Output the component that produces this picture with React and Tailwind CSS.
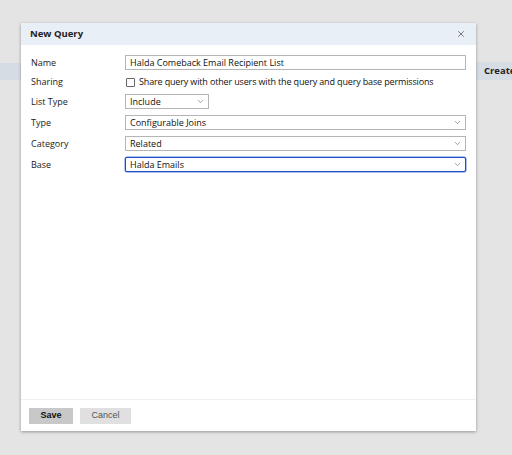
import { X, ChevronDown } from 'lucide-react'

const font = { fontFamily: '"Open Sans", "Noto Sans", sans-serif' }

function Row({ label, h = 'h-[21px]', children }) {
  return (
    <div className={`flex items-center ${h}`}>
      <div className="w-[104px] pl-[10px] text-[9px] text-[#222]">{label}</div>
      {children}
    </div>
  )
}

function Select({ value, width, focus }) {
  return (
    <div
      className={`flex items-center justify-between h-[15px] pl-[4px] pr-[3px] bg-white text-[9px] text-[#111] ${width} ${
        focus ? 'border border-[#1d4fc4] rounded-[2px] shadow-[0_0_0_0.5px_#5d86e0]' : 'border border-[#b5b5b5]'
      }`}
    >
      <span>{value}</span>
      <ChevronDown className="w-[9px] h-[9px] text-[#555]" strokeWidth={1.5} />
    </div>
  )
}

export default function App() {
  return (
    <div className="relative w-[512px] h-[455px] bg-[#e4e4e4] overflow-hidden" style={font}>
      <div className="absolute left-0 top-[63px] w-[21px] h-[17px] bg-[#d6dce4]" />
      <div className="absolute left-[476px] top-[62px] w-[40px] h-[18px] bg-[#d6dce4] flex items-center pl-[8px] text-[9.5px] font-bold text-[#222] whitespace-nowrap">
        Create
      </div>

      <div className="absolute left-[21px] top-[23px] w-[455px] h-[408px] bg-white flex flex-col shadow-[0_1px_3px_rgba(0,0,0,0.35)]">
        <div className="flex items-center justify-between h-[22px] bg-[#e9eff6] pl-[9px] pr-[10px]">
          <span className="text-[9.5px] font-bold text-[#222]">New Query</span>
          <X className="w-[10px] h-[10px] text-[#333]" strokeWidth={1.5} />
        </div>

        <div className="flex-1 pt-[7px]">
          <Row label="Name">
            <div className="flex items-center h-[15px] w-[341px] pl-[4px] border border-[#b5b5b5] text-[9px] text-[#111]">
              Halda Comeback Email Recipient List
            </div>
          </Row>
          <Row label="Sharing" h="h-[18px]">
            <div className="flex items-center gap-[4px] pl-[1px] text-[9px] text-[#111] tracking-[-0.15px]">
              <div className="w-[9px] h-[9px] border border-[#666] rounded-[1px] bg-white" />
              Share query with other users with the query and query base permissions
            </div>
          </Row>
          <Row label="List Type">
            <Select value="Include" width="w-[84px]" />
          </Row>
          <Row label="Type">
            <Select value="Configurable Joins" width="w-[341px]" />
          </Row>
          <Row label="Category">
            <Select value="Related" width="w-[341px]" />
          </Row>
          <Row label="Base">
            <Select value="Halda Emails" width="w-[341px]" focus />
          </Row>
        </div>

        <div className="h-[32px] border-t border-[#f0f0f0] flex items-center gap-[7px] pl-[8px]" style={{ fontFamily: '"Liberation Sans", Arial, sans-serif' }}>
          <button className="w-[44px] h-[16px] bg-[#c8c8c8] text-[9px] font-bold text-[#111]">Save</button>
          <button className="w-[51px] h-[16px] bg-[#e0e0e0] text-[9px] text-[#555]">Cancel</button>
        </div>
      </div>
    </div>
  )
}
